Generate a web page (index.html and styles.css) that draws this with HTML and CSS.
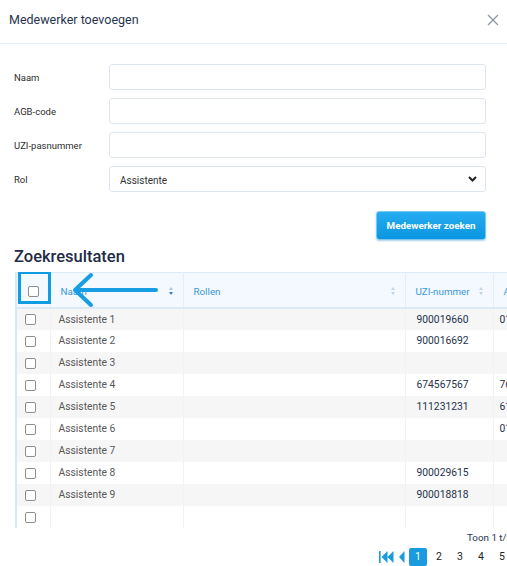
FILE: index.html
```html
<!DOCTYPE html>
<html lang="nl">
<head>
<meta charset="utf-8">
<title>Medewerker toevoegen</title>
<link rel="stylesheet" href="styles.css">
</head>
<body>
<div class="modal">
  <div class="modal-header">
    <span class="modal-title">Medewerker toevoegen</span>
    <svg class="close" width="12" height="12" viewBox="0 0 12 12"><path d="M1 1L11 11M11 1L1 11" stroke="#8b97a9" stroke-width="1.3" fill="none"/></svg>
  </div>
  <div class="form">
    <label class="lbl">Naam</label><div class="input"></div>
    <label class="lbl">AGB-code</label><div class="input"></div>
    <label class="lbl">UZI-pasnummer</label><div class="input"></div>
    <label class="lbl">Rol</label>
    <div class="input select"><span>Assistente</span>
      <svg width="9" height="6" viewBox="0 0 9 6"><path d="M1 1L4.5 4.5L8 1" stroke="#222" stroke-width="2" fill="none"/></svg>
    </div>
  </div>
  <div class="actions"><button class="btn">Medewerker zoeken</button></div>
  <h2 class="results-title">Zoekresultaten</h2>
  <div class="results">
    <table class="grid">
      <colgroup><col class="c-chk"><col class="c-naam"><col class="c-rol"><col class="c-uzi"><col class="c-a"></colgroup>
      <thead>
        <tr>
          <th class="chk"><span class="box"></span></th>
          <th><div class="th"><span>Naam</span><span class="sort active"></span></div></th>
          <th><div class="th"><span>Rollen</span><span class="sort"></span></div></th>
          <th><div class="th"><span>UZI-nummer</span><span class="sort"></span></div></th>
          <th><div class="th"><span>AGB-code</span></div></th>
        </tr>
      </thead>
      <tbody>
        <tr><td class="chk"><span class="box"></span></td><td class="naam">Assistente 1</td><td></td><td class="num">900019660</td><td class="num a">01234567</td></tr>
        <tr><td class="chk"><span class="box"></span></td><td class="naam">Assistente 2</td><td></td><td class="num">900016692</td><td class="num a"></td></tr>
        <tr><td class="chk"><span class="box"></span></td><td class="naam">Assistente 3</td><td></td><td class="num"></td><td class="num a"></td></tr>
        <tr><td class="chk"><span class="box"></span></td><td class="naam">Assistente 4</td><td></td><td class="num">674567567</td><td class="num a">76543210</td></tr>
        <tr><td class="chk"><span class="box"></span></td><td class="naam">Assistente 5</td><td></td><td class="num">111231231</td><td class="num a">61234567</td></tr>
        <tr><td class="chk"><span class="box"></span></td><td class="naam">Assistente 6</td><td></td><td class="num"></td><td class="num a">01234568</td></tr>
        <tr><td class="chk"><span class="box"></span></td><td class="naam">Assistente 7</td><td></td><td class="num"></td><td class="num a"></td></tr>
        <tr><td class="chk"><span class="box"></span></td><td class="naam">Assistente 8</td><td></td><td class="num">900029615</td><td class="num a"></td></tr>
        <tr><td class="chk"><span class="box"></span></td><td class="naam">Assistente 9</td><td></td><td class="num">900018818</td><td class="num a"></td></tr>
        <tr><td class="chk"><span class="box"></span></td><td class="naam"></td><td></td><td class="num"></td><td class="num a"></td></tr>
      </tbody>
    </table>
    <svg class="annot" width="160" height="40" viewBox="0 0 160 40">
      <rect x="3.5" y="1.5" width="30" height="30" fill="none" stroke="#109ce0" stroke-width="3"/>
      <path d="M60 19H140M75 4L59 19L75 34" fill="none" stroke="#169de2" stroke-width="4" stroke-linecap="round" stroke-linejoin="round"/>
    </svg>
  </div>
  <div class="footer">
    <div class="info">Toon 1 t/m 10 van 12</div>
    <div class="pager">
      <svg class="pg-ico" width="16" height="12" viewBox="0 0 16 12"><rect x="0" y="0" width="1.6" height="12" fill="#1a9be0"/><path d="M8.5 0L2.5 6L8.5 12Z M14.5 0L8.5 6L14.5 12Z" fill="#1a9be0"/></svg>
      <svg class="pg-ico prev" width="6" height="12" viewBox="0 0 6 12"><path d="M5.5 0L0 6L5.5 12Z" fill="#1a9be0"/></svg>
      <span class="pg active">1</span>
      <span class="pg">2</span>
      <span class="pg">3</span>
      <span class="pg">4</span>
      <span class="pg">5</span>
    </div>
  </div>
</div>
</body>
</html>
```
FILE: styles.css
```css
html, body {
  margin: 0;
  padding: 0;
  overflow: hidden;
  background: #fff;
}
body {
  font-family: Roboto, "Liberation Sans", Arial, sans-serif;
  width: 507px;
  height: 566px;
}
.modal {
  width: 507px;
  height: 566px;
  overflow: hidden;
}
.modal-header {
  height: 43px;
  display: flex;
  align-items: center;
  justify-content: space-between;
  padding: 0 8px 0 9px;
  border-bottom: 1px solid #e4edf8;
}
.modal-title {
  font-size: 12.5px;
  color: #27344f;
  margin-top: -4px;
}
.close {
  margin-top: -3px;
}
.form {
  display: grid;
  grid-template-columns: 95px 377px;
  row-gap: 8px;
  padding: 20px 0 0 14px;
  align-items: center;
}
.lbl {
  font-size: 9.5px;
  color: #2e2e2e;
}
.input {
  height: 24px;
  border: 1px solid #dde5f0;
  border-radius: 3px;
  background: #fff;
  box-sizing: content-box;
}
.select {
  display: flex;
  align-items: center;
  justify-content: space-between;
  padding: 0 8px 0 10px;
  font-size: 10px;
  color: #333;
  height: 24px;
}
.select span {
  padding-top: 2px;
}
.actions {
  display: flex;
  justify-content: flex-end;
  padding: 19px 21px 0 0;
}
.btn {
  width: 110px;
  height: 29px;
  border: 1px solid #7cc8f0;
  border-radius: 3px;
  background: linear-gradient(#26acf1, #0a96e0);
  color: #fff;
  font-family: Roboto, "Liberation Sans", Arial, sans-serif;
  font-size: 9.8px;
  font-weight: 700;
  box-shadow: 0 1px 2px rgba(10, 120, 200, 0.35);
  padding: 0;
}
.results-title {
  margin: 7px 0 0 14px;
  font-size: 16.5px;
  font-weight: 500;
  color: #1f2b46;
  line-height: 20px;
  height: 20px;
}
.results {
  position: relative;
  margin: 5px 0 0 15px;
  border-left: 2px solid #d5e9f8;
  width: 490px;
  overflow: hidden;
}
.grid {
  border-collapse: collapse;
  table-layout: fixed;
  width: 556px;
}
.c-chk { width: 33px; }
.c-naam { width: 133px; }
.c-rol { width: 222px; }
.c-uzi { width: 88px; }
.c-a { width: 80px; }
thead tr {
  background: #f3f9fe;
  height: 35px;
}
thead th {
  border-top: 1px solid #dbeaf7;
  border-bottom: 2px solid #dbeaf7;
  border-right: 1px solid #e2eef9;
  font-weight: 400;
  font-size: 9.8px;
  color: #3a98d6;
  text-align: left;
  padding: 0 9px 0 10px;
}
.th {
  display: flex;
  align-items: center;
  justify-content: space-between;
  white-space: nowrap;
  padding-top: 3px;
}
.sort {
  width: 5px;
  height: 8px;
  position: relative;
  display: inline-block;
  flex: none;
}
.sort::before, .sort::after {
  content: "";
  position: absolute;
  left: 0;
  border-left: 2.5px solid transparent;
  border-right: 2.5px solid transparent;
}
.sort::before {
  top: 0;
  border-bottom: 3px solid #c3d3e3;
}
.sort::after {
  bottom: 0;
  border-top: 3px solid #c3d3e3;
}
.sort.active::before { border-bottom-color: #a7c4e0; }
.sort.active::after { border-top-color: #3a7fc0; }
tbody tr {
  height: 22px;
}
tbody tr:nth-child(odd) {
  background: #f6f6f6;
}
tbody td {
  border-right: 1px solid #f2f2f2;
  font-size: 10.3px;
  padding: 0;
  white-space: nowrap;
  overflow: hidden;
}
th.chk {
  padding: 2px 0 0 11px;
  text-align: left;
}
td.chk {
  padding: 0 0 0 8px;
  text-align: left;
}
.box {
  display: inline-block;
  width: 9px;
  height: 9px;
  border: 1px solid #8e8e8e;
  border-radius: 2px;
  background: #fff;
  vertical-align: middle;
}
.naam {
  color: #585858;
  padding-left: 8px !important;
}
.num {
  color: #26324c;
  padding-left: 11px !important;
}
.num.a {
  padding-left: 6px !important;
}
.annot {
  position: absolute;
  left: -1px;
  top: -1px;
}
.footer {
  padding-top: 3px;
}
.info {
  padding-left: 467px;
  font-size: 9.8px;
  color: #27344f;
  white-space: nowrap;
  height: 13px;
  line-height: 13px;
}
.pager {
  display: flex;
  align-items: center;
  padding: 4px 0 0 379px;
  gap: 3px;
  white-space: nowrap;
}
.pg-ico {
  flex: none;
}
.pg-ico.prev {
  margin-left: 1px;
  margin-right: 1px;
}
.pg {
  display: inline-flex;
  width: 18px;
  height: 18px;
  align-items: center;
  justify-content: center;
  font-size: 10.5px;
  color: #222;
  flex: none;
}
.pg.active {
  background: #1a9be0;
  color: #fff;
  border-radius: 2px;
}
```
